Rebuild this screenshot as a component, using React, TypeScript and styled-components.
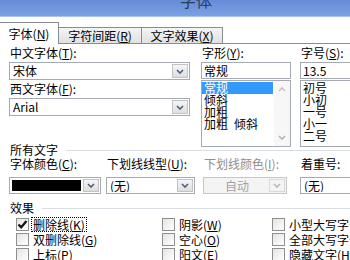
import styled, { createGlobalStyle } from "styled-components";

const GlobalStyle = createGlobalStyle`
  html, body { margin: 0; padding: 0; background: #ffffff; }
  body {
    font-family: "Noto Sans CJK SC", "Noto Sans", sans-serif;
    font-size: 12px;
    color: #000000;
  }
  * { box-sizing: border-box; }
`;

const Window = styled.div`
  width: 350px;
  height: 260px;
  overflow: hidden;
  background: #ffffff;
`;

const TitleBar = styled.div`
  height: 17px;
  padding-left: 180px;
  background: linear-gradient(to bottom, #658dd7, #7ba1e4);
  border-bottom: 1px solid #a9c1ea;
  overflow: hidden;
`;

const Title = styled.div`
  margin-top: -8px;
  font-size: 16px;
  line-height: 16px;
  color: #2c3a57;
`;

const TabStrip = styled.div`
  display: flex;
  align-items: flex-end;
  height: 22px;
  margin-top: 5px;
  border-bottom: 1px solid #898c95;
`;

const Tab = styled.div<{ $active?: boolean; $width: number }>`
  display: flex;
  align-items: center;
  justify-content: center;
  flex-shrink: 0;
  width: ${(p) => p.$width}px;
  height: ${(p) => (p.$active ? 22 : 16)}px;
  margin-bottom: ${(p) => (p.$active ? -1 : 0)}px;
  margin-left: -1px;
  border: 1px solid #898c95;
  border-bottom: none;
  background: ${(p) =>
    p.$active ? "#ffffff" : "linear-gradient(to bottom, #f4f4f4, #e1e1e1)"};
  line-height: 14px;
  white-space: nowrap;
`;

const Panel = styled.div`
  padding-left: 9px;
`;

const Row = styled.div`
  display: flex;
  align-items: flex-start;
`;

const Column = styled.div<{ $width: number; $offset?: number }>`
  display: flex;
  flex-direction: column;
  flex-shrink: 0;
  width: ${(p) => p.$width}px;
  margin-left: ${(p) => p.$offset ?? 0}px;
`;

const FieldLabel = styled.div<{ $height: number; $disabled?: boolean }>`
  height: ${(p) => p.$height}px;
  line-height: ${(p) => p.$height}px;
  padding-left: 1px;
  white-space: nowrap;
  color: ${(p) => (p.$disabled ? "#8e8e8e" : "#000000")};
`;

const Key = styled.span`
  text-decoration: underline;
`;

const ComboBox = styled.div<{ $height: number; $disabled?: boolean; $top?: number }>`
  display: flex;
  height: ${(p) => p.$height}px;
  margin-top: ${(p) => p.$top ?? 0}px;
  padding: 1px;
  border: 1px solid ${(p) => (p.$disabled ? "#c6c6c6" : "#a6abb3")};
  background: ${(p) => (p.$disabled ? "#f4f4f4" : "#ffffff")};
`;

const ComboValue = styled.div<{ $disabled?: boolean }>`
  flex: 1;
  padding-left: ${(p) => (p.$disabled ? 0 : 2)}px;
  text-align: ${(p) => (p.$disabled ? "center" : "left")};
  color: ${(p) => (p.$disabled ? "#a3a3a3" : "#000000")};
  line-height: 13px;
  white-space: nowrap;
  overflow: hidden;
`;

const ColorSwatch = styled.div`
  flex: 1;
  margin: 1px 2px 1px 1px;
  background: #000000;
`;

const DropButton = styled.div<{ $disabled?: boolean }>`
  display: flex;
  align-items: center;
  justify-content: center;
  width: 16px;
  border: 1px solid ${(p) => (p.$disabled ? "#dadada" : "#c3c3c3")};
  background: ${(p) =>
    p.$disabled ? "#f4f4f4" : "linear-gradient(to bottom, #f5f5f5, #dedede)"};
`;

const TextBox = styled.div`
  height: 17px;
  padding-left: 2px;
  border: 1px solid #a6abb3;
  line-height: 15px;
  white-space: nowrap;
`;

const ListBox = styled.div`
  display: flex;
  height: 67px;
  margin-top: 1px;
  border: 1px solid #a6abb3;
  background: #ffffff;
`;

const ListItems = styled.div`
  flex: 1;
  padding: 1px 1px 0 0;
`;

const ListItem = styled.div<{ $selected?: boolean }>`
  height: 12px;
  padding-left: 2px;
  line-height: 12px;
  white-space: pre;
  color: ${(p) => (p.$selected ? "#ffffff" : "#000000")};
  background: ${(p) => (p.$selected ? "#3399ff" : "transparent")};
`;

const ScrollBar = styled.div`
  display: flex;
  flex-direction: column;
  justify-content: space-between;
  width: 16px;
  background: #f7f7f7;
`;

const ScrollArrow = styled.div`
  display: flex;
  align-items: center;
  justify-content: center;
  height: 17px;
`;

const GroupHeader = styled.div<{ $top: number }>`
  display: flex;
  align-items: center;
  gap: 8px;
  height: 12px;
  margin-top: ${(p) => p.$top}px;
  padding-left: 1px;
  line-height: 12px;
`;

const GroupLine = styled.div`
  flex: 1;
  height: 1px;
  background: #d8dee3;
`;

const EffectsGrid = styled.div`
  display: grid;
  grid-template-columns: 146px 110px 120px;
  grid-auto-rows: 15px;
  margin-top: 3px;
  padding-left: 7px;
`;

const CheckItem = styled.div`
  display: flex;
  align-items: center;
  gap: 2px;
  white-space: nowrap;
`;

const CheckBox = styled.div`
  display: flex;
  align-items: center;
  justify-content: center;
  flex-shrink: 0;
  width: 13px;
  height: 13px;
  border: 1px solid #8e8f8f;
  background: linear-gradient(135deg, #e4e4e4, #ffffff);
`;

const CheckLabel = styled.span<{ $focused?: boolean }>`
  padding: 0 1px;
  line-height: 13px;
  border: 1px dotted ${(p) => (p.$focused ? "#000000" : "transparent")};
`;

const Chevron = ({ color, up }: { color: string; up?: boolean }) => (
  <svg width="8" height="5" viewBox="0 0 8 5">
    <path
      d={up ? "M1 4 L4 1 L7 4" : "M1 1 L4 4 L7 1"}
      fill="none"
      stroke={color}
      strokeWidth="1.6"
    />
  </svg>
);

const CheckMark = () => (
  <svg width="11" height="11" viewBox="0 0 11 11">
    <path d="M1.5 5.5 L4.2 8.3 L9.5 2" fill="none" stroke="#111" strokeWidth="2.2" />
  </svg>
);

const effects = [
  { label: "删除线", key: "K", checked: true, focused: true },
  { label: "阴影", key: "W" },
  { label: "小型大写字母", key: "M" },
  { label: "双删除线", key: "G" },
  { label: "空心", key: "O" },
  { label: "全部大写字母", key: "A" },
  { label: "上标", key: "P" },
  { label: "阳文", key: "E" },
  { label: "隐藏文字", key: "H" },
];

const styles = ["常规", "倾斜", "加粗", "加粗\u2002倾斜"];
const sizes = ["初号", "小初", "一号", "小一", "二号"];

export default function App() {
  return (
    <Window>
      <GlobalStyle />
      <TitleBar>
        <Title>字体</Title>
      </TitleBar>

      <TabStrip>
        <Tab $active $width={60}>
          字体(<Key>N</Key>)
        </Tab>
        <Tab $width={84}>
          字符间距(<Key>R</Key>)
        </Tab>
        <Tab $width={82}>
          文字效果(<Key>X</Key>)
        </Tab>
      </TabStrip>

      <Panel>
        <Row>
          <Column $width={181}>
            <FieldLabel $height={18}>
              中文字体(<Key>T</Key>):
            </FieldLabel>
            <ComboBox $height={18}>
              <ComboValue>宋体</ComboValue>
              <DropButton>
                <Chevron color="#4b5d7d" />
              </DropButton>
            </ComboBox>
            <FieldLabel $height={18}>
              西文字体(<Key>F</Key>):
            </FieldLabel>
            <ComboBox $height={18}>
              <ComboValue>Arial</ComboValue>
              <DropButton>
                <Chevron color="#4b5d7d" />
              </DropButton>
            </ComboBox>
          </Column>

          <Column $width={90} $offset={11}>
            <FieldLabel $height={18}>
              字形(<Key>Y</Key>):
            </FieldLabel>
            <TextBox>常规</TextBox>
            <ListBox>
              <ListItems>
                {styles.map((s, i) => (
                  <ListItem key={s} $selected={i === 0}>
                    {s}
                  </ListItem>
                ))}
              </ListItems>
              <ScrollBar>
                <ScrollArrow>
                  <Chevron color="#c4c4c4" up />
                </ScrollArrow>
                <ScrollArrow>
                  <Chevron color="#b4b4b4" />
                </ScrollArrow>
              </ScrollBar>
            </ListBox>
          </Column>

          <Column $width={62} $offset={9}>
            <FieldLabel $height={18}>
              字号(<Key>S</Key>):
            </FieldLabel>
            <TextBox>13.5</TextBox>
            <ListBox>
              <ListItems>
                {sizes.map((s) => (
                  <ListItem key={s}>{s}</ListItem>
                ))}
              </ListItems>
            </ListBox>
          </Column>
        </Row>

        <GroupHeader $top={-3}>
          所有文字
          <GroupLine />
        </GroupHeader>

        <Row>
          <Column $width={92}>
            <FieldLabel $height={15}>
              字体颜色(<Key>C</Key>):
            </FieldLabel>
            <ComboBox $height={17} $top={6}>
              <ColorSwatch />
              <DropButton>
                <Chevron color="#4b5d7d" />
              </DropButton>
            </ComboBox>
          </Column>
          <Column $width={89} $offset={5}>
            <FieldLabel $height={15}>
              下划线线型(<Key>U</Key>):
            </FieldLabel>
            <ComboBox $height={17} $top={6}>
              <ComboValue>(无)</ComboValue>
              <DropButton>
                <Chevron color="#4b5d7d" />
              </DropButton>
            </ComboBox>
          </Column>
          <Column $width={84} $offset={8}>
            <FieldLabel $height={15} $disabled>
              下划线颜色(<Key>I</Key>):
            </FieldLabel>
            <ComboBox $height={17} $top={6} $disabled>
              <ComboValue $disabled>自动</ComboValue>
              <DropButton $disabled>
                <Chevron color="#b8b8b8" />
              </DropButton>
            </ComboBox>
          </Column>
          <Column $width={62} $offset={13}>
            <FieldLabel $height={15}>着重号:</FieldLabel>
            <ComboBox $height={17} $top={6}>
              <ComboValue>(无)</ComboValue>
            </ComboBox>
          </Column>
        </Row>

        <GroupHeader $top={8}>
          效果
          <GroupLine />
        </GroupHeader>

        <EffectsGrid>
          {effects.map((e) => (
            <CheckItem key={e.key}>
              <CheckBox>{e.checked && <CheckMark />}</CheckBox>
              <CheckLabel $focused={e.focused}>
                {e.label}(<Key>{e.key}</Key>)
              </CheckLabel>
            </CheckItem>
          ))}
        </EffectsGrid>
      </Panel>
    </Window>
  );
}
